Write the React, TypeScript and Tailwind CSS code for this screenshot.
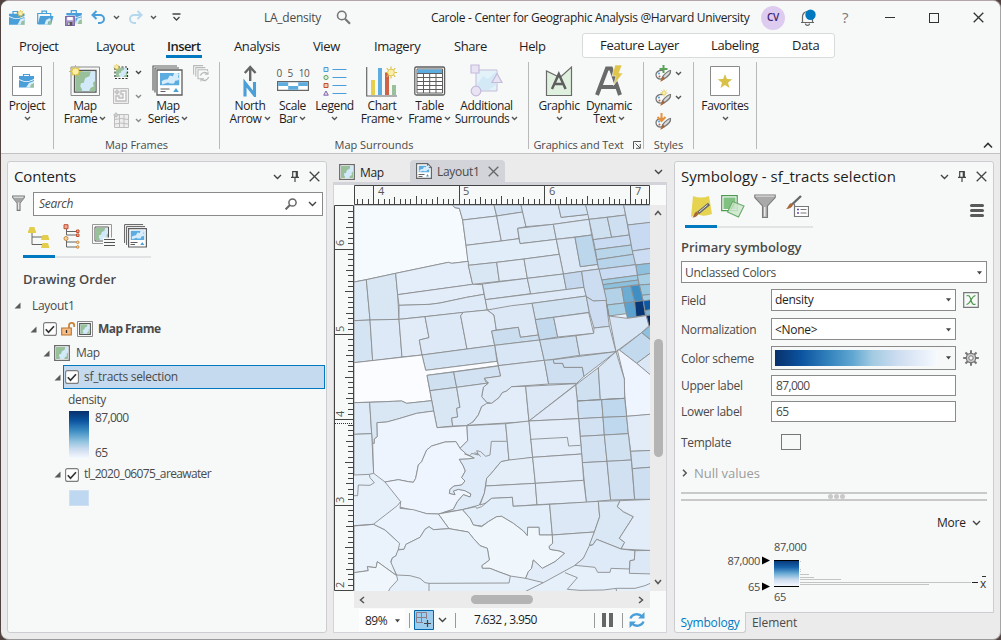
import React from "react";

type Kids = { children?: React.ReactNode };

/* ---------- small glyphs ---------- */

function Chev({ c = "#555" }: { c?: string }) {
  return (
    <svg className="inline-block h-[5px] w-[7px] shrink-0" viewBox="0 0 7 5">
      <path d="M1 1l2.5 2.5L6 1" fill="none" stroke={c} strokeWidth="1.4" />
    </svg>
  );
}

function ChevBig() {
  return (
    <svg className="h-[6px] w-[9px] shrink-0" viewBox="0 0 9 6">
      <path d="M1 1l3.5 3.5L8 1" fill="none" stroke="#444" strokeWidth="1.4" />
    </svg>
  );
}

function Close({ s = "#444" }: { s?: string }) {
  return (
    <svg className="h-[11px] w-[11px] shrink-0" viewBox="0 0 11 11">
      <path d="M.7.7l9.6 9.6M10.3.7L.7 10.3" stroke={s} strokeWidth="1.3" />
    </svg>
  );
}

function Pin() {
  return (
    <svg className="h-[11px] w-[8px] shrink-0" viewBox="0 0 8 11">
      <path d="M1.7 6V.6h4.6V6M0 6.4h8M4 6.4V11" fill="none" stroke="#444" strokeWidth="1.2" />
      <path d="M5.4 1v5" stroke="#444" strokeWidth="1.4" />
    </svg>
  );
}

function Sun({ x, y, r }: { x: number; y: number; r: number }) {
  const rays = [0, 45, 90, 135, 180, 225, 270, 315];
  return (
    <g transform={`translate(${x} ${y})`} stroke="#d9bd3c">
      {rays.map((a) => (
        <path key={a} d={`M0 ${-r * 1.1}V${-r * 1.8}`} transform={`rotate(${a})`} strokeWidth={r * 0.32} />
      ))}
      <circle r={r} fill="#fbeea8" strokeWidth={r * 0.25} />
    </g>
  );
}

function Land({ x, y, w, h }: { x: number; y: number; w: number; h: number }) {
  return (
    <svg x={x} y={y} width={w} height={h} viewBox="0 0 12 12" preserveAspectRatio="none">
      <path fill="#d2e9fa" d="M0 0h12v12H0z" />
      <path fill="#98c19b" d="M0 0h9.3L8.5 3 6 4 5 7H3.500l-.5 2L4.200 11 3.500 12H0z" />
      <path fill="#98c19b" d="M12 5.500L10.500 7l.5 2-2 1-.7 2H12z" />
    </svg>
  );
}

function BlueMap({ x, y, w, h }: { x: number; y: number; w: number; h: number }) {
  return (
    <svg x={x} y={y} width={w} height={h} viewBox="0 0 18 12" preserveAspectRatio="none">
      <path fill="#5dace0" d="M0 0h18v12H0z" />
      <path fill="#d7edfb" d="M9 2.500l3 .5 1-3h3l1.500 1-1 3 1.500 1-1 2-3 .5-1 2.500H9L7.500 9 5 10 2 11l-.5-3L4 6.500 7 6z" />
    </svg>
  );
}

function MapBox({ size }: { size: "s" | "m" }) {
  return (
    <svg className={size === "s" ? "h-[15px] w-[15px] shrink-0" : "h-[16px] w-[16px] shrink-0"} viewBox="0 0 16 16">
      <path d="M.7.7h14.600v14.600H.7z" fill="#fff" stroke="#6b6b6b" strokeWidth="1.3" />
      <Land x={2} y={2} w={12} h={12} />
    </svg>
  );
}

function FrameBox() {
  return (
    <svg className="h-[16px] w-[16px] shrink-0" viewBox="0 0 16 16">
      <path d="M.5.5h15v15H.5z" fill="#f7f7f7" stroke="#8a8a8a" />
      <path d="M2.700 2.700h10.600v10.600H2.700z" fill="#fff" stroke="#555" strokeWidth="1.2" />
      <Land x={3.300} y={3.300} w={9.400} h={9.400} />
    </svg>
  );
}

function LayoutPage() {
  return (
    <svg className="h-[16px] w-[16px] shrink-0" viewBox="0 0 16 16">
      <path d="M.6.6h11l3.800 3.800v11H.6z" fill="#fff" stroke="#666" strokeWidth="1.2" />
      <path d="M11.500.6v4h4" fill="none" stroke="#666" />
      <BlueMap x={2.500} y={2.500} w={11} h={7} />
      <path d="M2.500 11.500h6M2.500 13.500h4" stroke="#666" />
      <path d="M11.500 11l1.500 2.500h-3z" fill="#4a9fd8" />
    </svg>
  );
}

function Tri() {
  return (
    <svg className="h-[7px] w-[7px] shrink-0" viewBox="0 0 7 7">
      <path d="M6.500.5v6h-6z" fill="#5a5a5a" />
    </svg>
  );
}

function Check() {
  return (
    <svg className="h-[14px] w-[14px] shrink-0" viewBox="0 0 14 14">
      <rect x=".6" y=".6" width="12.800" height="12.800" rx="2" fill="#fff" stroke="#7d7d7d" strokeWidth="1.1" />
      <path d="M2.800 7.200l2.700 3 5.500-6" fill="none" stroke="#333" strokeWidth="1.700" />
    </svg>
  );
}

function DropTri() {
  return (
    <svg className="h-[4px] w-[5px] shrink-0" viewBox="0 0 5 4">
      <path d="M0 .3h5L2.500 3.600z" fill="#444" />
    </svg>
  );
}

function Funnel() {
  return (
    <svg className="h-[16px] w-[13px] shrink-0" viewBox="0 0 13 16">
      <path d="M.7 1h11.600v1.500L8 8v7.400H5.200V8L.7 2.500z" fill="#e8e8e8" stroke="#777" strokeWidth="1.100" />
      <path d="M1 2.800h11L8 7.600H5z" fill="#a4a4a4" />
    </svg>
  );
}

/* ---------- title bar ---------- */

function Briefcase({ kind }: { kind: "new" | "open" | "save" }) {
  return (
    <svg className="h-[16px] w-[17px] shrink-0" viewBox="0 0 17 16">
      {kind === "open" ? (
        <g>
          <path d="M.7 14V3.500h13V6" fill="none" stroke="#4a9fd8" strokeWidth="1.200" />
          <path d="M5 3.500V1.200h4.500v2.300" fill="none" stroke="#4a9fd8" strokeWidth="1.200" />
          <path d="M3 6h13.500l-2.300 8.500H.7z" fill="#4a9fd8" />
          <path d="M13 8l-4 2-1.500 4.500h3l1-3 2.500-1z" fill="#d7edfb" />
          <path d="M14.500 10l-2.500 1-1 3.500h3z" fill="#98c19b" />
        </g>
      ) : (
        <g transform={kind === "save" ? "translate(1.300 -.8)" : undefined}>
          <path d={kind === "save" ? "M5 4V1.500h5V4" : "M4 4V1.500h4.500V4"} fill="none" stroke="#4a9fd8" strokeWidth="1.200" />
          <path d="M0 3.700h15.500V6L10 8H5L0 6z" fill="#4a9fd8" />
          <path d="M0 7l5 1.800h5L15.500 7v7.800H0z" fill="#4a9fd8" />
          <path d="M15.500 8l-4 1-3 5.800h7z" fill="#d7edfb" />
          <path d="M15.500 10l-3 1.500-1 3.300h4z" fill="#98c19b" />
        </g>
      )}
      {kind === "new" && <Sun x={11.500} y={3.600} r={2.200} />}
      {kind === "save" && (
        <g>
          <path d="M0 5.500h10.500V16H0z" fill="#f7f9f9" />
          <path d="M.6 6.600h8.800v8.800H.6z" fill="#a993cc" stroke="#8068a8" strokeWidth="1.100" />
          <path d="M2.200 7h5.600v3.300H2.200z" fill="#fff" />
          <path d="M2.700 12h4.600v3.400H2.700z" fill="#555" />
          <path d="M3.300 12.600h1.200v2.400H3.300z" fill="#fff" />
        </g>
      )}
    </svg>
  );
}

function Undo({ c, flip }: { c: string; flip?: boolean }) {
  return (
    <svg className="h-[15px] w-[15px] shrink-0" viewBox="0 0 15 15">
      <g transform={flip ? "matrix(-1 0 0 1 15 0)" : undefined} fill="none" stroke={c} strokeWidth="2">
        <path d="M5.500 1L1.500 5l4 4" />
        <path d="M1.500 5h7.500a4 4 0 0 1 0 8H7" />
      </g>
    </svg>
  );
}

function TitleBar() {
  return (
    <div className="flex h-[33px] shrink-0 items-center pl-[8px] text-[12px] text-[#1e1e1e]">
      <div className="flex w-[28px]"><Briefcase kind="new" /></div>
      <div className="flex w-[28px]"><Briefcase kind="open" /></div>
      <div className="flex w-[26px]"><Briefcase kind="save" /></div>
      <div className="flex w-[22px]"><Undo c="#4a9fd8" /></div>
      <div className="flex w-[15px]"><Chev /></div>
      <div className="flex w-[22px]"><Undo c="#b5d8ef" flip /></div>
      <div className="flex w-[22px]"><Chev /></div>
      <svg className="h-[9px] w-[9px] shrink-0" viewBox="0 0 9 9">
        <path d="M.5 1h8M1.500 4l3 3 3-3" fill="none" stroke="#444" strokeWidth="1.300" />
      </svg>
      <div className="ml-[83px] w-[72px] whitespace-nowrap tracking-[-0.25px] text-[#4a4a4a]">LA_density</div>
      <svg className="h-[15px] w-[15px] shrink-0" viewBox="0 0 15 15">
        <circle cx="5.800" cy="5.500" r="4.300" fill="none" stroke="#777" strokeWidth="1.600" />
        <path d="M9 8.700l5 5" stroke="#777" strokeWidth="2.200" />
      </svg>
      <div className="ml-[80px] w-[330px] whitespace-nowrap tracking-[-0.31px]">
        Carole - Center for Geographic Analysis @Harvard University
      </div>
      <div className="flex h-[24px] w-[24px] items-center justify-center rounded-full bg-[#decbf0] text-[10px] font-semibold tracking-[-0.2px] text-[#3f2470]">CV</div>
      <svg className="ml-[15px] h-[17px] w-[18px] shrink-0" viewBox="0 0 18 17">
        <path d="M1 13.500h13M2.500 13V7.500a5 5 0 0 1 5-5M12.500 8v5.500M5.500 14.500a2 1.800 0 0 0 4 0" fill="none" stroke="#666" strokeWidth="1.200" />
        <circle cx="10.500" cy="5.800" r="5.200" fill="#0079c1" />
      </svg>
      <div className="ml-[24px] w-[43px] text-[15px] text-[#777]">?</div>
      <div className="h-px w-[10px] bg-[#333]" />
      <div className="ml-[34px] h-[10px] w-[10px] border border-[#333]" />
      <div className="ml-[34px] flex"><Close s="#333" /></div>
    </div>
  );
}

function TabBar() {
  return (
    <div className="flex h-[28px] shrink-0 items-start text-[13px] text-[#1e1e1e]">
      <div className="ml-[18px] w-[77px] pt-[2px] leading-[20px] tracking-[-0.4px]">Project</div>
      <div className="w-[70px] pt-[2px] leading-[20px] tracking-[-0.4px]">Layout</div>
      <div className="flex w-[68px] flex-col pt-[2px] leading-[20px]">
        <span className="pl-px font-semibold tracking-[-0.55px]">Insert</span>
        <span className="-mt-px h-[3px] w-[36px] bg-[#0079c1]" />
      </div>
      <div className="w-[79px] pt-[2px] leading-[20px] tracking-[-0.4px]">Analysis</div>
      <div className="w-[61px] pt-[2px] leading-[20px] tracking-[-0.4px]">View</div>
      <div className="w-[80px] pt-[2px] leading-[20px] tracking-[-0.4px]">Imagery</div>
      <div className="w-[65px] pt-[2px] leading-[20px] tracking-[-0.4px]">Share</div>
      <div className="w-[63px] pt-[2px] leading-[20px] tracking-[-0.4px]">Help</div>
      <div className="-mt-px flex h-[25px] w-[253px] items-center rounded-[3px] border border-[#d9dada] bg-white pl-[17px]">
        <span className="w-[111px] tracking-[-0.3px]">Feature Layer</span>
        <span className="w-[81px] tracking-[-0.4px]">Labeling</span>
        <span className="tracking-[-0.3px]">Data</span>
      </div>
    </div>
  );
}

/* ---------- ribbon ---------- */

function ProjectIcon() {
  return (
    <svg className="h-[30px] w-[30px]" viewBox="0 0 30 30">
      <path d="M.5.500h29v29H.5z" fill="#fff" stroke="#8a8a8a" />
      <path d="M11.500 10V8.500h6V10" fill="none" stroke="#4a9fd8" strokeWidth="1.200" />
      <path d="M7 10h15v3l-5 2h-5l-5-2z" fill="#4a9fd8" />
      <path d="M7 14l5 1.800h5l5-1.800v7.500H7z" fill="#4a9fd8" />
      <path d="M22 15l-5 2-3 4.500h8z" fill="#d7edfb" />
      <path d="M22 17l-3 1.500-1 3h4z" fill="#98c19b" />
    </svg>
  );
}

function MapFrameIcon() {
  return (
    <svg className="h-[32px] w-[32px]" viewBox="0 0 32 32">
      <path d="M2 2h28.500v28.500H2z" fill="#f7f8f8" stroke="#8a8a8a" />
      <path d="M5.500 5.500h21.500v21.500H5.500z" fill="#fff" stroke="#555" strokeWidth="1.300" />
      <Land x={6.200} y={6.200} w={20.200} h={20.200} />
      <Sun x={6.500} y={6.500} r={3.600} />
    </svg>
  );
}

function MapSeriesIcon() {
  return (
    <svg className="h-[32px] w-[32px]" viewBox="0 0 32 32">
      <path d="M1 25.500V1h24M3 27.500V3h24" fill="none" stroke="#5e5e5e" strokeWidth="1.200" />
      <path d="M5 5h25v25H5z" fill="#fff" stroke="#5e5e5e" strokeWidth="1.300" />
      <BlueMap x={8} y={8} w={19.500} h={12.500} />
      <path d="M8.500 24h9M8.500 26.500h5" stroke="#5e5e5e" strokeWidth="1.200" />
      <path d="M24 23l2.800 4h-5.600z" fill="#4a9fd8" />
    </svg>
  );
}

function ReshapeIcons({ kind }: { kind: 0 | 1 | 2 }) {
  const g = "#bdbdbd";
  return (
    <svg className="h-[16px] w-[16px] shrink-0" viewBox="0 0 16 16">
      {kind === 0 && (
        <g>
          <Land x={3} y={3.500} w={11} h={9.500} />
          <path d="M2 4v10.500h12.500V3H5" fill="none" stroke="#333" strokeWidth="1.200" strokeDasharray="2 1.500" />
          <Sun x={3.600} y={3.200} r={1.900} />
        </g>
      )}
      {kind === 1 && (
        <g fill="none" stroke={g}>
          <path d="M.5.500h15v15H.5z" fill="#eee" />
          <path d="M8 3h5v10H3V8h3v2h4V6H8z" strokeWidth="1.300" fill="#fafafa" />
          <circle cx="4" cy="4" r="1.500" />
          <path d="M4 1v6M1 4h6" strokeWidth=".7" />
        </g>
      )}
      {kind === 2 && (
        <g fill="none" stroke={g}>
          <path d="M1.500 2.500h14v13h-14z" fill="#eee" />
          <path d="M2 7.500q6-2 13 0M2 12q6-2 13 0M6.500 3v12M11 3v12" />
          <circle cx="3" cy="3" r="1.600" fill="#eee" />
          <path d="M3 0v6M0 3h6" strokeWidth=".7" />
        </g>
      )}
    </svg>
  );
}

function SeriesRefresh() {
  return (
    <svg className="h-[17px] w-[17px] shrink-0" viewBox="0 0 17 17">
      <g fill="none" stroke="#b9b9b9" strokeWidth="1.100">
        <path d="M.6 9.500V.6h9.500M2.800 11.500V2.600h9.500M14.500 6V4.700H5v9h3" />
        <path d="M7.500 10.500a4 4 0 0 1 7-1.500M15.500 12a4 4 0 0 1-7 2" strokeWidth="1.400" />
        <path d="M15 6.500V9.300h-3M8 16.500v-2.800h3" />
      </g>
    </svg>
  );
}

function NorthIcon() {
  return (
    <svg className="h-[32px] w-[16px]" viewBox="0 0 16 32">
      <path d="M8.200 16V3M2.800 8l5.400-6 5.400 6" fill="none" stroke="#666" strokeWidth="2.400" />
      <path d="M3 31.500V18l9.500 12V17" fill="none" stroke="#4a9fd8" strokeWidth="3.100" />
    </svg>
  );
}

function ScaleIcon() {
  return (
    <div className="-mt-[5px] flex w-[34px] flex-col items-center">
      <div className="flex h-[15px] w-[34px] justify-between text-[10px] leading-[15px] tracking-[-0.3px] text-[#555]">
        <span className="pl-px">0</span>
        <span>5</span>
        <span>10</span>
      </div>
      <svg className="h-[10px] w-[32px]" viewBox="0 0 32 10">
        <path d="M.6.6h30.800v8.800H.6z" fill="#fff" stroke="#666" strokeWidth="1.200" />
        <path d="M1.200 1.200h10v3.800h-10zM11.200 5h10v3.800h-10zM21.200 1.200h9.600V5h-9.600z" fill="#5dace0" />
      </svg>
    </div>
  );
}

function LegendIcon() {
  return (
    <svg className="h-[30px] w-[24px]" viewBox="0 0 24 30">
      <path d="M9.500 3.500h14M9.500 11.500h14M9.500 19.500h14M9.500 27.500h14" stroke="#4a9fd8" strokeWidth="1.100" />
      <path d="M1 1.500h4v4H1z" fill="#d7edfb" stroke="#4a9fd8" />
      <circle cx="3" cy="11.500" r="2.100" fill="#dcefdc" stroke="#5ea05e" />
      <path d="M1 17.500h4v4H1z" fill="#f4c7b8" stroke="#c05030" />
      <path d="M3 25l2.300 4.200H.7z" fill="#e4dcf2" stroke="#8068a8" />
    </svg>
  );
}

function ChartIcon() {
  return (
    <svg className="h-[32px] w-[32px]" viewBox="0 0 32 32">
      <path d="M.7 2v29H31" fill="none" stroke="#666" strokeWidth="1.200" />
      <path d="M5 15h4v15H5z" fill="#e6cf4c" />
      <path d="M12 3h4v27h-4z" fill="#5dace0" />
      <path d="M19 8h4v22h-4z" fill="#cf6244" />
      <path d="M26 20h4v10h-4z" fill="#98c19b" />
      <Sun x={25} y={7.500} r={3.400} />
    </svg>
  );
}

function TableIcon() {
  return (
    <svg className="h-[32px] w-[32px]" viewBox="0 0 32 32">
      <rect x=".8" y="2" width="29.800" height="28" rx="1.500" fill="#f7f8f8" stroke="#5e5e5e" strokeWidth="1.300" />
      <path d="M3 4h25.500v24H3z" fill="#fff" stroke="#5e5e5e" />
      <path d="M3.500 4.500h24.500v4H3.500z" fill="#5dace0" />
      <path d="M3 8.500h25.500M3 12.500h25.500M3 16.500h25.500M3 20.500h25.500M3 24.500h25.500M9.500 8.500V28M15.700 8.500V28M22 8.500V28" stroke="#5e5e5e" />
    </svg>
  );
}

function SurroundsIcon() {
  return (
    <svg className="h-[33px] w-[33px]" viewBox="0 0 33 33">
      <path d="M6 6h21v21H6z" fill="#e3f2f9" stroke="#c3bcd8" />
      <path d="M6 22l7-10 5 3 9-8v13l-8 6H6z" fill="#d3e9f6" />
      <path d="M1 1h8v8H1z" fill="#e9e3f3" stroke="#c4bbda" strokeWidth="1.200" />
      <circle cx="6" cy="27" r="4.800" fill="#e9e3f3" stroke="#c4bbda" strokeWidth="1.200" />
      <path d="M27 9.500l5 9H22z" fill="#e9e3f3" stroke="#c4bbda" strokeWidth="1.200" />
    </svg>
  );
}

function GraphicIcon() {
  return (
    <svg className="h-[32px] w-[28px]" viewBox="0 0 28 32">
      <path d="M1.500 6v24.500h25V2L15 12.500z" fill="#e0f0de" stroke="#6b6b6b" strokeWidth="1.200" />
      <path d="M7 24l6.800-15 6.800 15M9 19h9.500" fill="none" stroke="#5e5e5e" strokeWidth="2.500" />
    </svg>
  );
}

function DynamicIcon() {
  return (
    <svg className="h-[32px] w-[30px]" viewBox="0 0 30 32">
      <path d="M3 30L13 3.500h4L26 30M7 22h15" fill="none" stroke="#6a6a6a" strokeWidth="4" />
      <path d="M21 0h7l-3 8h4L19.500 20.500 22 11h-4z" fill="#dfc64a" stroke="#f7f9f9" strokeWidth=".6" />
    </svg>
  );
}

function Palette({ kind }: { kind: "add" | "new" | "import" }) {
  return (
    <svg className="h-[17px] w-[17px] shrink-0" viewBox="0 0 17 17">
      <path d="M8 5.500C3 5 .8 7.500 1 10s2.500 4.500 5 4c1.500-.5 1.500-2 3-2.500" fill="#f7f9f9" stroke="#777" strokeWidth="1.300" />
      <circle cx="4" cy="8.500" r="1" fill="#4a9fd8" />
      <circle cx="4.500" cy="11.500" r="1" fill="#cf6244" />
      <path d="M15.500 5.500q.8 4-6.500 8.500-1-1-1.500-2.200Q12 6 15.500 5.500z" fill="#d8d8d8" stroke="#777" strokeWidth="1.200" />
      <path d="M8.500 11.500l1.500 1.800c-1 2-3 3.200-5 3.200 1.200-1 1.500-3.500 3.500-5z" fill="#a9683a" />
      {kind === "add" && <path d="M8.500 0v8M4.500 4h8" stroke="#5ba35b" strokeWidth="2" />}
      {kind === "new" && <Sun x={9} y={4} r={2} />}
      {kind === "import" && <path d="M6.500 0v7M2.500 4l4 4 4-4" fill="none" stroke="#e9913a" strokeWidth="2" />}
    </svg>
  );
}

function FavIcon() {
  return (
    <svg className="h-[30px] w-[30px]" viewBox="0 0 30 30">
      <path d="M.5.500h29v29H.5z" fill="#fff" stroke="#8a8a8a" />
      <path d="M15 8l1.900 5.100 5.400.2-4.300 3.400 1.500 5.200-4.500-3-4.500 3 1.500-5.200-4.300-3.400 5.400-.2z" fill="#d9c148" />
    </svg>
  );
}

function Big({ icon, a, b, w }: { icon: React.ReactNode; a: string; b?: string; w: string }) {
  return (
    <div className={`flex shrink-0 flex-col items-center ${w}`}>
      <div className="flex h-[37px] items-center justify-center">{icon}</div>
      <div className="h-[13px] whitespace-nowrap leading-[13px]">{a}</div>
      <div className="flex h-[13px] items-center gap-[2px] whitespace-nowrap leading-[13px]">
        {b && <span>{b}</span>}
        <Chev />
      </div>
    </div>
  );
}

function Group({ w, title, children }: Kids & { w: string; title?: React.ReactNode }) {
  return (
    <div className={`flex h-[87px] shrink-0 flex-col border-r border-[#b9b9b9] ${w}`}>
      <div className="flex h-[76px] shrink-0">{children}</div>
      <div className="flex h-[14px] shrink-0 items-center justify-center whitespace-nowrap text-[11px] leading-[14px] tracking-[-0.05px] text-[#4a4a4a]">{title}</div>
    </div>
  );
}

function Ribbon() {
  return (
    <div className="flex h-[92px] shrink-0 border-b border-[#c3c3c3] text-[12px] tracking-[-0.38px] text-[#1e1e1e]">
      <Group w="w-[53px]">
        <Big w="w-[52px]" icon={<ProjectIcon />} a="Project" />
      </Group>
      <Group w="w-[166px]" title="Map Frames">
        <Big w="ml-[8px] w-[46px]" icon={<MapFrameIcon />} a="Map" b="Frame" />
        <div className="ml-[5px] flex w-[32px] flex-col gap-[8px] pt-[2px]">
          {([0, 1, 2] as const).map((k) => (
            <div key={k} className="flex h-[16px] items-center gap-[6px]">
              <ReshapeIcons kind={k} />
              <Chev c={k === 0 ? "#444" : "#8a8a8a"} />
            </div>
          ))}
        </div>
        <Big w="w-[46px]" icon={<MapSeriesIcon />} a="Map" b="Series" />
        <div className="ml-[2px] pt-[3px]"><SeriesRefresh /></div>
      </Group>
      <Group w="w-[309px]" title="Map Surrounds">
        <Big w="ml-[6px] w-[48px]" icon={<NorthIcon />} a="North" b="Arrow" />
        <Big w="w-[37px]" icon={<ScaleIcon />} a="Scale" b="Bar" />
        <Big w="w-[47px]" icon={<LegendIcon />} a="Legend" />
        <Big w="w-[48px]" icon={<ChartIcon />} a="Chart" b="Frame" />
        <Big w="w-[47px]" icon={<TableIcon />} a="Table" b="Frame" />
        <Big w="w-[67px] tracking-[-0.45px]" icon={<SurroundsIcon />} a="Additional" b="Surrounds" />
      </Group>
      <Group
        w="w-[115px]"
        title={
          <span className="flex items-center gap-[9px] pl-[2px] tracking-[-0.15px]">
            Graphics and Text
            <svg className="h-[8px] w-[8px]" viewBox="0 0 8 8">
              <path d="M.5 8V.5H8M2.500 2.500L7 7M7.300 3v4.300H3" fill="none" stroke="#555" />
            </svg>
          </span>
        }
      >
        <Big w="ml-[7px] w-[46px]" icon={<GraphicIcon />} a="Graphic" />
        <Big w="w-[54px]" icon={<DynamicIcon />} a="Dynamic" b="Text" />
      </Group>
      <Group w="w-[50px]" title="Styles">
        <div className="flex flex-col gap-[7px] pl-[11px] pt-[3px]">
          <div className="flex h-[17px] items-center gap-[3px]"><Palette kind="add" /><Chev /></div>
          <div className="flex h-[17px] items-center gap-[3px]"><Palette kind="new" /><Chev /></div>
          <div className="flex h-[17px] items-center"><Palette kind="import" /></div>
        </div>
      </Group>
      <Group w="w-[63px]">
        <Big w="w-[62px]" icon={<FavIcon />} a="Favorites" />
      </Group>
      <div className="flex flex-1 items-end justify-end pb-[4px] pr-[7px]">
        <svg className="h-[7px] w-[10px]" viewBox="0 0 10 7">
          <path d="M1 5.500l4-4 4 4" fill="none" stroke="#333" strokeWidth="1.600" />
        </svg>
      </div>
    </div>
  );
}

/* ---------- contents pane ---------- */

function ContentsPane() {
  return (
    <div className="flex h-[472px] w-[320px] shrink-0 flex-col rounded-[3px] border border-[#cdcdd1] bg-[#f7f9f9] pl-px text-[12px] tracking-[-0.3px] text-[#4a4a4a]">
      <div className="flex h-[29px] items-center pl-[5px] text-[15px] text-[#1e1e1e]">
        <span className="w-[259px] tracking-[-0.15px]">Contents</span>
        <ChevBig />
        <span className="ml-[9px] flex"><Pin /></span>
        <span className="ml-[10px] flex"><Close /></span>
      </div>
      <div className="flex h-[24px] items-center pl-[3px]">
        <Funnel />
        <div className="ml-[8px] mt-[2px] flex h-[24px] w-[290px] items-center border border-[#8a8a8a] bg-white pl-[5px] italic">
          <span className="w-[246px]">Search</span>
          <svg className="h-[12px] w-[12px]" viewBox="0 0 12 12">
            <circle cx="7.500" cy="4.500" r="3.600" fill="none" stroke="#666" strokeWidth="1.500" />
            <path d="M5 7L.6 11.400" stroke="#666" strokeWidth="2" />
          </svg>
          <span className="ml-[11px] flex"><ChevBig /></span>
        </div>
      </div>
      <div className="ml-[14px] mt-[8px] flex h-[35px] w-[128px] items-start border-b-[2px] border-[#e2e3e4]">
        <div className="-mb-[2px] flex h-[35px] w-[32px] justify-center border-b-[3px] border-[#0079c1] pt-[2px]">
          <svg className="h-[24px] w-[22px]" viewBox="0 0 22 24">
            <path d="M4 8v11.500h12M4 12h12" fill="none" stroke="#666" />
            <path d="M1.500 2h5l.8 3.500H8V8H0V5.500h.7zM14.500 10h5.500l1.500 5h-8.500zM14.500 18h5.500l1.500 5h-8.500z" fill="#e3cd4b" />
          </svg>
        </div>
        <div className="flex w-[32px] justify-center pt-[1px]">
          <svg className="h-[25px] w-[17px]" viewBox="0 0 17 25">
            <path d="M3.500 5v6h10M3.500 7.500h10M3.500 15v8h10M3.500 18h10" fill="none" stroke="#666" />
            <path d="M1 .7h4v4H1z" fill="#f0a895" stroke="#c05030" />
            <path d="M13.500 6h2.500v2.500h-2.500zM13.500 10h2.500v2.500h-2.500z" fill="#f0a895" stroke="#c05030" />
            <circle cx="3" cy="14.500" r="2" fill="#f7d3a1" stroke="#c88a40" />
            <circle cx="14.700" cy="18.300" r="1.300" fill="#f7d3a1" stroke="#c88a40" />
            <circle cx="14.700" cy="23" r="1.300" fill="#f7d3a1" stroke="#c88a40" />
          </svg>
        </div>
        <div className="flex w-[32px] justify-center pt-[1px]">
          <svg className="h-[24px] w-[23px]" viewBox="0 0 23 24">
            <path d="M.5.500h19v19H.5z" fill="#f7f8f8" stroke="#999" />
            <path d="M3 3h13.500v14H3z" fill="#fff" stroke="#555" />
            <Land x={3.700} y={3.700} w={12.300} h={12.600} />
            <path d="M11 13.500h12v9H11z" fill="#f7f9f9" />
            <path d="M12 15.500h11M12 18.500h11M12 21.500h11" stroke="#555" strokeWidth="1.100" />
          </svg>
        </div>
        <div className="flex w-[32px] justify-center pt-[1px]">
          <svg className="h-[24px] w-[23px]" viewBox="0 0 23 24">
            <path d="M.6 19V.6h18.500M2.600 21V2.600h18.500" fill="none" stroke="#5e5e5e" />
            <path d="M4.600 4.600h17.800v18.400H4.600z" fill="#fff" stroke="#5e5e5e" strokeWidth="1.200" />
            <BlueMap x={6.500} y={6.500} w={14} h={9.500} />
            <path d="M6.500 18.500h7M6.500 20.500h4.500" stroke="#5e5e5e" />
            <path d="M18.300 18l2 3h-4z" fill="#4a9fd8" />
          </svg>
        </div>
      </div>
      <div className="mt-[11px] h-[20px] pl-[14px] text-[13px] font-semibold leading-[20px] tracking-[0.02px]">Drawing Order</div>
      <div className="mt-[5px] flex h-[23px] items-center pl-[5px]"><Tri /><span className="ml-[11px]">Layout1</span></div>
      <div className="flex h-[24px] items-center pl-[21px]">
        <Tri />
        <span className="ml-[6px] flex"><Check /></span>
        <svg className="ml-[4px] h-[14px] w-[15px]" viewBox="0 0 15 14">
          <path d="M8 6V3.500a2.600 2.600 0 0 1 5.200 0V5" fill="none" stroke="#c9843a" strokeWidth="1.800" />
          <path d="M.7 6h9.600v7H.7z" fill="#f7bd84" stroke="#b87430" strokeWidth="1.100" />
          <path d="M5.500 8v3" stroke="#333" strokeWidth="1.300" />
        </svg>
        <span className="ml-px flex"><FrameBox /></span>
        <span className="ml-[5px] font-bold tracking-[-0.55px]">Map Frame</span>
      </div>
      <div className="flex h-[24px] items-center pl-[34px]"><Tri /><span className="ml-[4px] flex"><MapBox size="m" /></span><span className="ml-[6px]">Map</span></div>
      <div className="flex h-[24px] items-center pl-[45px]">
        <Tri />
        <div className="ml-[2px] flex h-[24px] w-[262px] items-center border border-[#0079c1] bg-[#c5daee] pl-px">
          <Check />
          <span className="ml-[5px]">sf_tracts selection</span>
        </div>
      </div>
      <div className="flex h-[22px] items-center pl-[59px] font-medium tracking-[-0.35px]">density</div>
      <div className="flex h-[48px] pl-[60px]">
        <div className="h-[48px] w-[20px] bg-[linear-gradient(180deg,#08306b_0%,#0b539f_20%,#3e8ec4_42%,#93c4df_64%,#cddcf0_80%,#f9fbff_100%)]" />
        <div className="flex flex-col justify-between pl-[6px] leading-[13px] tracking-[-0.65px]"><span>87,000</span><span>65</span></div>
      </div>
      <div className="mt-[3px] flex h-[24px] items-center pl-[45px]">
        <Tri />
        <span className="ml-[4px] flex pt-[2px]"><Check /></span>
        <span className="ml-[5px] tracking-[-0.64px]">tl_2020_06075_areawater</span>
      </div>
      <div className="ml-[60px] mt-[4px] h-[16px] w-[20px] border border-[#cfe0f3] bg-[#bed8f2]" />
    </div>
  );
}

/* ---------- map ---------- */

const TRACTS: [string, string][] = [
  ["#f5faff", "72,150 367,150 375,158 388,160 398,195 408,271 415,319 365,325 355,322 197,355 109,374 72,381"],
  ["#e0ecf9", "367,150 492,150 500,183 398,195 388,160 375,158"],
  ["#d3e3f3", "492,150 573,150 578,171 500,183"],
  ["#e2edf9", "398,195 500,183 514,258 408,271"],
  ["#dfeaf8", "500,183 578,171 588,215 563,220 567,251 514,258"],
  ["#dde9f7", "573,150 685,150 693,187 775,178 777,193 670,208 588,215"],
  ["#d6e5f5", "685,150 767,150 775,178 693,187"],
  ["#d6e4f4", "767,150 881,150 887,180 777,193"],
  ["#dae8f6", "563,220 670,208 679,253 570,266"],
  ["#e1edf9", "408,271 514,258 567,251 570,266 679,253 688,298 582,312 500,322 415,331"],
  ["#dbe8f6", "670,208 777,193 785,240 679,253"],
  ["#dce8f6", "679,253 735,247 751,335 803,328 807,342 755,349 700,357 688,298"],
  ["#bcd7ec", "735,247 785,240 803,328 751,335"],
  ["#cfe0f1", "777,193 832,187 845,247 790,254"],
  ["#cddff1", "832,187 887,180 898,240 845,247"],
  ["#c9dbf2", "790,254 898,240 904,270 796,284"],
  ["#b9d5ea", "796,284 904,270 910,298 801,314"],
  ["#b7d4ea", "801,314 910,298 917,329 806,343"],
  ["#d6e4f4", "881,150 970,150 970,202 893,210 887,180"],
  ["#c8daf2", "893,210 970,201 970,279 907,288"],
  ["#cbdcf3", "907,288 970,279 970,324 917,330"],
  ["#8fc1de", "917,330 970,324 970,354 922,361"],
  ["#c9dbf2", "806,343 917,329 922,361 815,375"],
  ["#a2cce3", "815,375 922,361 925,375 819,389"],
  ["#8dc0dd", "819,389 925,375 928,388 822,403"],
  ["#a9cfe5", "922,361 970,354 970,387 928,390"],
  ["#9bc8e1", "928,390 970,387 970,417 935,421"],
  ["#a5cde4", "935,421 970,417 970,436 940,440"],
  ["#b3d2e8", "822,403 875,397 883,444 831,450"],
  ["#6dadd4", "875,397 902,393 914,440 883,444"],
  ["#3f8fc5", "902,393 928,390 940,440 914,440"],
  ["#a6cee4", "831,450 883,444 890,476 836,483"],
  ["#5aa1cf", "883,444 914,440 918,485 892,489"],
  ["#083776", "914,440 940,437 946,481 918,485"],
  ["#0c59a5", "940,438 970,433 970,463 945,467"],
  ["#7db5d8", "945,467 970,463 970,479 949,482"],
  ["#dbe8f5", "72,381 109,374 120,495 72,497"],
  ["#d9e7f5", "109,374 197,355 203,419 207,493 120,495"],
  ["#e4eefa", "197,355 355,322 365,325 415,319 415,331 428,388 203,419"],
  ["#d9e7f5", "415,331 500,322 508,379 428,388"],
  ["#e1ecf8", "500,322 582,312 592,370 508,379"],
  ["#dde9f7", "582,312 688,298 700,357 592,370"],
  ["#e3edf9", "203,419 428,388 457,389 462,418 410,427 330,444 300,448 207,451"],
  ["#dfeaf8", "207,451 300,448 330,444 410,427 462,418 466,435 472,465 395,473 285,485 207,493"],
  ["#dde9f7", "457,387 592,370 602,416 466,434"],
  ["#dbe8f6", "592,370 700,357 709,404 602,417"],
  ["#c5d8ee", "700,357 755,349 762,397 709,404"],
  ["#dfeaf8", "466,434 762,397 769,423 606,445 545,455 530,460 472,466"],
  ["#d1e2f2", "606,445 769,423 778,472 616,494"],
  ["#cdddf1", "755,349 807,342 822,403 830,437 790,438 769,425 762,397"],
  ["#cddcf0", "769,425 790,438 828,436 838,514 792,519 778,472"],
  ["#d5e4f3", "72,497 120,495 128,617 72,623"],
  ["#dde9f7", "120,495 207,493 216,606 128,617"],
  ["#e1ecf8", "207,493 285,485 297,548 268,555 276,600 216,606"],
  ["#dde9f7", "285,485 400,472 392,482 411,582 276,600 268,555 297,548"],
  ["#e2ecf8", "400,472 472,465 492,480 499,525 485,528 494,571 411,582 392,482"],
  ["#dde8f7", "472,465 545,452 606,445 616,494 625,540 571,547 565,517 499,525 492,480"],
  ["#cbdef0", "485,528 565,517 571,547 625,540 629,555 494,571"],
  ["#c3d9ee", "616,494 671,487 683,546 629,555"],
  ["#dfeaf8", "671,487 776,473 791,535 683,546"],
  ["#d9e6f5", "494,571 629,555 643,616 505,632"],
  ["#d4e3f3", "276,600 494,571 501,619 287,646"],
  ["#fafcff", "72,623 276,600 287,646 501,619 505,632 291,661 305,737 230,745 215,738 190,739 72,743"],
  ["#cddff0", "629,555 738,542 749,601 643,617"],
  ["#d9e6f5", "738,542 791,535 792,519 838,514 858,590 749,601"],
  ["#d8e5f5", "831,450 836,483 892,490 949,482 957,512 935,533 858,590"],
  ["#072b62", "949,482 970,479 970,515 957,512"],
  ["#8fc1de", "935,533 970,505 970,560"],
  ["#c3d9ee", "868,585 935,533 970,562 970,588 920,625"],
  ["#dce7f6", "920,625 970,588 970,668"],
  ["#eff5fe", "862,585 868,585 920,625 970,667 970,778 890,784 884,720 883,672"],
  ["#cfe0f1", "291,661 371,651 380,697 300,707"],
  ["#d3e2f3", "371,651 505,633 512,663 463,670 467,680 475,684 380,697"],
  ["#dee9f7", "505,632 643,616 656,687 545,695 530,708 517,713 507,728 485,745 470,742 455,725 460,697 475,684 463,670 512,663"],
  ["#d9e7f5", "300,707 380,697 390,757 380,760 383,786 365,789 368,813 321,818 311,768"],
  ["#dfebf8", "380,697 475,684 460,697 455,725 470,742 475,745 455,755 445,780 425,805 411,812 368,813 365,789 383,786 380,760 390,757"],
  ["#e2edf9", "470,745 485,745 507,728 517,713 530,708 545,695 587,694 597,800 411,811 430,800 445,780 455,755"],
  ["#dce8f6", "587,694 740,686 597,798"],
  ["#cddff0", "643,616 670,614 672,625 698,625 702,637 757,637 762,664 740,685 656,687"],
  ["#cfe0f2", "670,614 858,590 762,664 757,637 702,637 698,625 672,625"],
  ["#cfe0f1", "737,690 805,638 811,734 742,738"],
  ["#d9e6f5", "858,590 805,638 811,734 884,730 883,672"],
  ["#dfe9f7", "737,690 742,738 746,791 597,798"],
  ["#cddff2", "742,738 815,734 819,787 746,791"],
  ["#c0d8ed", "815,734 884,730 890,784 819,787"],
  ["#d3e2f3", "746,791 819,787 823,840 751,844"],
  ["#c0d8ed", "819,787 890,784 895,836 823,840"],
  ["#e1ecf8", "890,784 970,777 970,886 902,889 895,836"],
  ["#d3e2f3", "751,844 823,840 831,919 757,923"],
  ["#d0e1f2", "823,840 895,836 904,915 831,919"],
  ["#d6e4f4", "757,923 831,919 842,1035 769,1042"],
  ["#d2e1f2", "831,919 904,915 914,1033 842,1035"],
  ["#d4e3f3", "902,889 970,886 970,936 907,941"],
  ["#cddff0", "907,941 970,936 970,1033 914,1033"],
  ["#dfeaf8", "72,743 119,742 125,836 72,838"],
  ["#d9e7f5", "119,742 190,739 215,738 230,745 305,737 311,768 260,775 200,793 170,801 141,803 142,845 133,852 133,865 127,865 125,836"],
  ["#e1ecf9", "72,838 125,836 131,955 118,958 72,960"],
  ["#edf4fe", "141,803 170,801 200,793 260,775 311,768 321,818 411,812 413,857 390,880 378,860 345,861 305,873 290,885 275,920 265,930 257,970 250,982 235,980 205,974 165,981 131,955 128,865 133,865 133,852 142,845"],
  ["#eff5ff", "290,885 305,873 345,861 378,860 390,880 410,898 433,909 413,912 388,913 400,933 406,948 395,968 405,978 395,990 372,993 360,1003 358,1015 375,1019 370,1008 385,1003 405,1007 423,1017 420,1026 400,1019 382,1040 370,1063 325,1077 290,1076 205,1055 212,1040 165,981 205,974 235,980 250,982 257,970 265,930 275,920"],
  ["#dfebf8", "411,812 527,806 537,915 513,920 484,955 470,970 463,1015 448,1050 397,1064 340,1073 370,1063 382,1040 400,1019 420,1026 423,1017 405,1007 385,1003 370,1008 375,1019 358,1015 360,1003 372,993 395,990 405,978 395,968 406,948 400,933 388,913 413,912 433,909 410,898 390,880 413,857"],
  ["#e0ecf8", "527,806 597,798 608,907 555,915 537,916"],
  ["#e2edf9", "597,798 746,791 755,897 608,907"],
  ["#e4eef9", "537,915 555,913 608,907 616,985 467,993 470,970 484,955 513,920"],
  ["#e2edf9", "608,907 755,897 761,976 616,985"],
  ["#e2edf9", "467,993 616,985 621,1049 549,1054 547,1027 485,1030 465,1045 450,1050 463,1015"],
  ["#e2edf9", "616,985 761,976 769,1042 621,1049"],
  ["#e2eef9", "397,1064 437,1055 440,1060 455,1055 485,1030 547,1027 549,1054 659,1048 667,1140 628,1140 627,1117 593,1117 592,1142 580,1128 550,1105 515,1084 500,1085 475,1100 455,1113 430,1110 420,1090"],
  ["#dce8f5", "659,1048 805,1039 809,1085 793,1131 667,1140"],
  ["#eff6fc", "397,1064 420,1090 430,1110 455,1115 475,1100 500,1085 515,1084 550,1105 580,1128 592,1142 593,1117 627,1117 628,1140 667,1140 668,1165 657,1175 660,1183 690,1188 704,1195 675,1220 637,1240 610,1215 605,1240 595,1250 587,1270 541,1263 505,1250 480,1240 457,1240 455,1232 478,1215 472,1180 450,1172 430,1150 415,1131 357,1121 325,1077"],
  ["#eaf3fd", "212,1040 202,1052 130,1108 165,1125 203,1160 205,1183 222,1183 228,1168 270,1147 285,1123 297,1115 310,1124 357,1121 325,1077 290,1076 250,1064 210,1060"],
  ["#e6f0fa", "310,1124 357,1121 415,1131 430,1150 450,1172 472,1180 478,1215 455,1232 457,1240 480,1240 505,1250 541,1263 537,1284 297,1285 285,1283 270,1270 240,1262 200,1260 182,1225 187,1208 197,1203 202,1185 222,1183 228,1168 270,1147 285,1123 297,1115"],
  ["#eaf2fc", "72,1112 130,1108 165,1125 203,1160 209,1165 205,1183 197,1203 187,1208 182,1220 200,1262 142,1220 138,1238 112,1235 115,1247 72,1253"],
  ["#eff6fc", "72,1253 115,1247 112,1235 138,1238 142,1220 200,1262 203,1275 180,1300 175,1310 72,1310"],
  ["#e3edf9", "667,1140 793,1131 775,1185 760,1210 735,1231 640,1283 587,1270 595,1250 605,1240 610,1215 637,1240 675,1220 704,1195 690,1188 660,1183 657,1175 668,1165"],
  ["#dae7f5", "805,1039 870,1037 862,1055 880,1070 910,1085 868,1150 884,1162 873,1182 800,1153 788,1170 778,1170 793,1131 809,1085"],
  ["#e3edf9", "870,1037 970,1033 970,1187 873,1182 884,1162 868,1150 910,1085 880,1070 862,1055"],
  ["#dfeaf8", "778,1172 788,1170 800,1153 873,1182 915,1187 913,1215 900,1217 898,1242 843,1240 840,1252 803,1252 795,1237 735,1231 760,1210"],
  ["#dce8f5", "915,1187 970,1186 970,1257 898,1255 900,1217 913,1215"],
];

const LINES = [
  "601,853 712,847 716,873 751,871",
  "530,859 484,859 480,900 467,904 452,890 440,887 445,900 425,895 420,902 403,897",
  "433,893 445,897 452,905",
  "118,958 120,968 133,983 120,991 85,990 83,1022 72,1022",
  "130,1108 72,1113",
  "297,1285 297,1310",
  "640,1283 585,1310",
  "705,1253 742,1268 712,1303 750,1306 820,1305 860,1300 915,1300 945,1292 965,1283",
  "858,1300 860,1310",
  "742,738 884,730",
];

function TractMap() {
  return (
    <svg className="h-[386px] w-[296px] shrink-0" viewBox="72 150 888 1158">
      <path d="M72 150h888v1158H72z" fill="#e6f0fb" />
      <g stroke="#8b8d8f" strokeWidth="2.700" strokeLinejoin="round">
        {TRACTS.map(([fill, pts], i) => (
          <polygon key={i} fill={fill} points={pts} />
        ))}
        {LINES.map((pts, i) => (
          <polyline key={i} fill="none" points={pts} />
        ))}
      </g>
    </svg>
  );
}

function HRuler() {
  const ticks: React.ReactNode[] = [];
  for (let i = -3; i < 52; i++) {
    const x = 19.400 + i * 5.356;
    if (x > 295) break;
    const m = ((i % 16) + 16) % 16;
    const y = m === 0 ? 0 : m === 8 ? 11 : m % 4 === 0 ? 12 : 14;
    ticks.push(<path key={i} d={`M${Math.floor(x) + 0.5} ${y}V19`} />);
  }
  return (
    <svg className="h-[20px] w-[296px] shrink-0 overflow-visible" viewBox="0 0 296 20">
      <path d="M.5.500h295v19H.5z" fill="#f7f9f9" stroke="#444" />
      <g stroke="#444">{ticks}</g>
      <g fontSize="11" fill="#555">
        <text x="24" y="10">4</text>
        <text x="109" y="10">5</text>
        <text x="195" y="10">6</text>
        <text x="281" y="10">7</text>
      </g>
    </svg>
  );
}

function VRuler() {
  const ticks: React.ReactNode[] = [];
  for (let i = -8; i < 65; i++) {
    const y = 44.300 + i * 5.330;
    if (y < 2 || y > 385) continue;
    const m = ((i % 16) + 16) % 16;
    const x = m === 0 ? 0 : m === 8 ? 11 : m % 4 === 0 ? 12 : 14;
    ticks.push(<path key={i} d={`M${x} ${Math.floor(y) + 0.5}H19`} />);
  }
  return (
    <svg className="h-[386px] w-[20px] shrink-0 overflow-visible" viewBox="0 0 20 386">
      <path d="M.5.500h19v385H.5z" fill="#f7f9f9" stroke="#444" />
      <g stroke="#444">{ticks}</g>
      <path d="M1 218.500h18" stroke="#333" strokeDasharray="1 1" />
      <g fontSize="11" fill="#555">
        <text transform="translate(10 41) rotate(-90)">6</text>
        <text transform="translate(10 127) rotate(-90)">5</text>
        <text transform="translate(10 212) rotate(-90)">4</text>
        <text transform="translate(10 298) rotate(-90)">3</text>
        <text transform="translate(10 383) rotate(-90)">2</text>
      </g>
    </svg>
  );
}

function Arrow({ d }: { d: string }) {
  return (
    <svg className="h-[8px] w-[8px] shrink-0" viewBox="0 0 8 8">
      <path d={d} fill="none" stroke="#555" strokeWidth="1.500" />
    </svg>
  );
}

function DocPane() {
  return (
    <div className="flex h-[472px] w-[334px] shrink-0 flex-col text-[12px] tracking-[-0.3px] text-[#1e1e1e]">
      <div className="flex h-[21px] items-center pl-[6px]">
        <MapBox size="m" />
        <span className="ml-[5px] w-[50px] pt-[2px]">Map</span>
        <div className="flex h-[22px] w-[95px] items-center self-end rounded-t-[4px] bg-[#d2d4d9] pl-[6px] text-[#4a4a4a]">
          <LayoutPage />
          <span className="ml-[5px] w-[51px] pt-[2px]">Layout1</span>
          <Close s="#666" />
        </div>
        <span className="ml-[149px] flex"><ChevBig /></span>
      </div>
      <div className="flex h-[451px] flex-col border-x border-b border-t-[3px] border-[#d2d4d9] bg-[#f9fafa]">
        <div className="flex h-[20px] pl-[20px]"><HRuler /></div>
        <div className="flex h-[386px]">
          <VRuler />
          <TractMap />
          <div className="flex w-[16px] flex-col items-center bg-[#ebebeb] pt-[4px]">
            <Arrow d="M1 6l3-3.500L7 6" />
            <div className="mt-[122px] h-[118px] w-[9px] rounded-full bg-[#b4b4b4]" />
            <div className="mt-[121px] flex"><Arrow d="M1 2l3 3.500L7 2" /></div>
          </div>
        </div>
        <div className="ml-[20px] flex h-[17px] w-[296px] items-center bg-[#ebebeb] pl-[4px]">
          <Arrow d="M6 1L2.500 4 6 7" />
          <div className="ml-[105px] h-[9px] w-[62px] rounded-full bg-[#b4b4b4]" />
          <div className="ml-[104px] flex"><Arrow d="M2 1l3.500 3L2 7" /></div>
        </div>
        <div className="flex h-[24px] items-center pl-[25px] tracking-[-0.5px]">
          <div className="flex h-[22px] w-[46px] items-center bg-white pl-[6px] pt-px">
            <span className="w-[30px]">89%</span>
            <DropTri />
          </div>
          <div className="ml-[4px] h-[15px] w-px bg-[#999]" />
          <svg className="ml-[4px] h-[20px] w-[20px]" viewBox="0 0 20 20">
            <path d="M.5.500h19v19H.5z" fill="#9dcdee" stroke="#0067ab" />
            <path d="M2.500 2.500h10v10h-10zM7.500 2.500v10M2.500 7.500h10" fill="none" stroke="#8a7f8a" />
            <path d="M9 9h6v6H9z" fill="#9dcdee" />
            <path d="M13.500 10v7M10 13.500h7" stroke="#444" strokeWidth="1.200" />
          </svg>
          <span className="ml-[4px] flex"><ChevBig /></span>
          <div className="ml-[8px] h-[15px] w-px bg-[#999]" />
          <span className="ml-[18px] w-[120px] tracking-[-0.6px]">7.632 , 3.950</span>
          <div className="h-[15px] w-px bg-[#999]" />
          <div className="ml-[7px] flex gap-[3px]">
            <div className="h-[14px] w-[4px] bg-[#666]" />
            <div className="h-[14px] w-[4px] bg-[#666]" />
          </div>
          <div className="ml-[9px] h-[15px] w-px bg-[#999]" />
          <svg className="ml-[6px] h-[16px] w-[16px]" viewBox="0 0 16 16">
            <path d="M1.500 6.500a6.500 5.500 0 0 1 11.500-2M14.500 9.500a6.500 5.500 0 0 1-11.500 2" fill="none" stroke="#4a9fd8" strokeWidth="2.400" />
            <path d="M15.500 0v6.500H9zM.5 16V9.500H7z" fill="#4a9fd8" />
          </svg>
        </div>
      </div>
    </div>
  );
}

/* ---------- symbology pane ---------- */

function FieldRow({ label, h, children }: Kids & { label: string; h: string }) {
  return (
    <div className={`flex items-center ${h}`}>
      <span className="w-[90px] shrink-0 pt-px">{label}</span>
      {children}
    </div>
  );
}

function SymbologyPane() {
  return (
    <div className="flex h-[472px] w-[320px] shrink-0 flex-col text-[12px] tracking-[-0.3px] text-[#4a4a4a]">
      <div className="flex h-[452px] flex-col rounded-t-[3px] border border-[#cdcdd1] bg-[#f7f9f9] pl-[6px]">
        <div className="flex h-[29px] items-center text-[15px] text-[#1e1e1e]">
          <span className="w-[259px] whitespace-nowrap tracking-[0.05px]">Symbology - sf_tracts selection</span>
          <ChevBig />
          <span className="ml-[9px] flex"><Pin /></span>
          <span className="ml-[10px] flex"><Close /></span>
        </div>
        <div className="flex h-[38px]">
          <div className="ml-[4px] flex h-[37px] w-[128px] items-start border-b-[2px] border-[#e2e3e4]">
            <div className="-mb-[2px] flex h-[37px] w-[32px] justify-center border-b-[3px] border-[#0079c1] pt-[4px]">
              <svg className="h-[24px] w-[24px]" viewBox="0 0 24 24">
                <path d="M4 1q8 3 16 0l3 18q-8 3-12 1-5-1-9 2Z" fill="#e6d34f" />
                <path d="M20 9L9 18" stroke="#666" strokeWidth="3" />
                <path d="M18.500 9.800L10 17" stroke="#ddd" />
                <path d="M7.500 16.500l2 2c-1 2.500-3 4-6 4 1.500-2 1.500-4.500 4-6z" fill="#a9683a" />
              </svg>
            </div>
            <div className="flex w-[32px] justify-center pt-[3px]">
              <svg className="h-[24px] w-[24px]" viewBox="0 0 24 24">
                <path d="M.7 1.700h15.500v15H.7z" fill="#f7f9f9" stroke="#4e9a4e" strokeWidth="1.200" />
                <path d="M2.500 3.500h12v11.500h-12z" fill="#80c080" />
                <path d="M11.500 7.500l11.500 4.500-5.500 11L6.500 18z" fill="#cfe8cf" fillOpacity=".85" stroke="#6aaa6a" strokeWidth="1.100" />
                <path d="M13 9.500l-3 6" stroke="#a5d3a5" />
              </svg>
            </div>
            <div className="flex w-[32px] justify-center pt-[3px]">
              <svg className="h-[25px] w-[22px]" viewBox="0 0 22 25">
                <path d="M.8 1h20.400v2.500L13.500 12v11.500h-5V12L.8 3.500z" fill="#a9a9a9" stroke="#7a7a7a" strokeWidth="1.100" />
                <path d="M10 13h1.500v9.500H10z" fill="#e8e8e8" />
                <path d="M1.500 1.500h19v1.300h-19z" fill="#d9d9d9" />
              </svg>
            </div>
            <div className="flex w-[32px] justify-center pt-[3px]">
              <svg className="h-[24px] w-[24px]" viewBox="0 0 24 24">
                <path d="M16 2L7 10.500" stroke="#666" strokeWidth="2.400" />
                <path d="M6 9l2 2c-1 2.500-4 4-7 4 2-1.500 2.500-4.500 5-6z" fill="#a9683a" />
                <path d="M9.500 12.500h14v10h-14zM9.500 10v3" fill="#fff" stroke="#777" strokeWidth="1.200" />
                <path d="M12 15.500h2M12 19h2" stroke="#5e4aa8" strokeWidth="1.600" />
                <path d="M15.500 15.500h6M15.500 19h6" stroke="#777" strokeWidth="1.200" />
              </svg>
            </div>
          </div>
          <div className="ml-[157px] mt-[13px] flex h-[13px] w-[14px] flex-col justify-between">
            <div className="h-[3px] rounded-full bg-[#5a5a5a]" />
            <div className="h-[3px] rounded-full bg-[#5a5a5a]" />
            <div className="h-[3px] rounded-full bg-[#5a5a5a]" />
          </div>
        </div>
        <div className="mt-[7px] h-[22px] text-[13px] font-semibold leading-[22px] tracking-[0px]">Primary symbology</div>
        <div className="mt-[3px] flex h-[22px] w-[306px] items-center border border-[#8a8a8a] bg-white pl-[3px] pt-px">
          <span className="w-[292px]">Unclassed Colors</span>
          <DropTri />
        </div>
        <FieldRow label="Field" h="mt-[6px] h-[22px]">
          <div className="flex h-[22px] w-[185px] items-center border border-[#8a8a8a] bg-white pl-[3px] text-[#1e1e1e]">
            <span className="w-[171px]">density</span>
            <DropTri />
          </div>
          <svg className="ml-[7px] h-[16px] w-[16px]" viewBox="0 0 16 16">
            <path d="M.7.7h14.600v14.600H.7z" fill="#f7f9f9" stroke="#777" strokeWidth="1.200" />
            <path d="M3.500 4q3-2 4.500 4t4.500 4M12.500 3.500Q10 4 8 8t-4.500 4.500" fill="none" stroke="#4e9a4e" strokeWidth="1.200" />
          </svg>
        </FieldRow>
        <FieldRow label="Normalization" h="mt-[7px] h-[22px]">
          <div className="flex h-[22px] w-[185px] items-center border border-[#8a8a8a] bg-white pl-[3px] pt-px text-[#1e1e1e]">
            <span className="w-[171px]">&lt;None&gt;</span>
            <DropTri />
          </div>
        </FieldRow>
        <FieldRow label="Color scheme" h="mt-[6px] h-[24px]">
          <div className="flex h-[24px] w-[185px] items-center border border-[#8a8a8a] bg-[#f7f9f9] pl-[3px]">
            <div className="h-[16px] w-[163px] bg-[linear-gradient(90deg,#08306b_0%,#0b539f_16%,#3585bf_34%,#62a8d2_48%,#a3cbe2_60%,#cddcf0_75%,#f7faff_100%)]" />
            <span className="ml-[8px] flex"><DropTri /></span>
          </div>
          <svg className="ml-[7px] h-[16px] w-[16px]" viewBox="-8 -8 16 16">
            {[0, 45, 90, 135, 180, 225, 270, 315].map((a) => (
              <path key={a} d="M-1-4.500V-7.800H1V-4.500z" fill="#777" transform={`rotate(${a})`} />
            ))}
            <circle r="4.700" fill="#ccc" stroke="#777" strokeWidth="1.200" />
            <circle r="2.200" fill="#f7f9f9" stroke="#777" />
          </svg>
        </FieldRow>
        <FieldRow label="Upper label" h="mt-[5px] h-[21px]">
          <div className="flex h-[21px] w-[185px] items-center border border-[#8a8a8a] bg-white pl-[4px] tracking-[-0.65px]">87,000</div>
        </FieldRow>
        <FieldRow label="Lower label" h="mt-[5px] h-[21px]">
          <div className="flex h-[21px] w-[185px] items-center border border-[#8a8a8a] bg-white pl-[4px] tracking-[-0.65px]">65</div>
        </FieldRow>
        <FieldRow label="Template" h="mt-[12px] h-[16px]">
          <div className="ml-[10px] h-[16px] w-[20px] border border-[#777]" />
        </FieldRow>
        <div className="mt-[13px] flex h-[20px] items-center text-[13px] text-[#9b9b9b]">
          <Arrow d="M2 .8L5.200 4 2 7.200" />
          <span className="ml-[5px] pt-px tracking-[-0.03px]">Null values</span>
        </div>
        <div className="mt-[9px] flex h-[9px] w-[306px] items-center justify-center gap-px border-y-2 border-[#c9c9c9] pl-[4px]">
          <span className="h-[5px] w-[5px] rounded-full bg-[#c9c9c9]" />
          <span className="h-[5px] w-[5px] rounded-full bg-[#c9c9c9]" />
          <span className="h-[5px] w-[5px] rounded-full bg-[#c9c9c9]" />
        </div>
        <div className="mt-[13px] flex h-[18px] items-center pl-[256px] text-[#1e1e1e]">
          <span className="w-[35px] tracking-[-0.2px]">More</span>
          <ChevBig />
        </div>
        <div className="mt-[8px] flex h-[15px] items-center pl-[93px] text-[11px]">87,000</div>
        <div className="-mt-px flex h-[36px]">
          <div className="flex h-[39px] w-[79px] flex-col justify-between text-right text-[11px] leading-[13px]">
            <span>87,000</span>
            <span>65</span>
          </div>
          <svg className="h-[34px] w-[227px] overflow-visible" viewBox="0 0 227 34">
            <defs>
              <linearGradient id="ramp" x1="0" y1="0" x2="0" y2="1">
                <stop offset="0" stopColor="#083c7d" />
                <stop offset=".25" stopColor="#1763ab" />
                <stop offset=".5" stopColor="#6aabd4" />
                <stop offset=".75" stopColor="#cddcf0" />
                <stop offset="1" stopColor="#f5f9ff" />
              </linearGradient>
            </defs>
            <path d="M2 2.500l8 4-8 4zM2 28.500l8 4-8 4z" fill="#000" />
            <path d="M14 7h25v25H14z" fill="url(#ramp)" />
            <path d="M14 6.500h25M14 32.500h25" stroke="#000" />
            <path d="M40 7.500h1M40 15.500h1M40 17.500h1M40 20.500h9M40 23.500h14M40 25.500h41M40 28.500h171M40 30.500h129" stroke="#c4c4c4" />
            <path d="M212 28.500h6" stroke="#222" />
            <path d="M222 22.500h4" stroke="#333" />
            <text x="220" y="33.500" fontSize="12" fill="#333">x</text>
          </svg>
        </div>
        <div className="flex h-[15px] items-center pl-[93px] text-[11px]">65</div>
      </div>
      <div className="-mt-px flex h-[21px]">
        <div className="flex w-[72px] items-center justify-center rounded-b-[3px] border-x border-b border-[#cdcdd1] bg-[#f7f9f9] pt-px tracking-[-0.2px] text-[#0079c1]">Symbology</div>
        <div className="flex items-center pl-[6px] pt-px tracking-[-0.1px]">Element</div>
      </div>
    </div>
  );
}

export default function App() {
  return (
    <div className="h-[640px] w-[1001px] overflow-hidden bg-[#51423f] pl-px font-['Open_Sans','Noto_Sans',sans-serif]">
      <div className="flex h-[640px] w-[1000px] flex-col overflow-hidden rounded-[8px] border-b border-r border-t border-b-[#999] border-r-[#a5a5a5] border-t-[#b3a5aa] bg-[#ebebeb]">
        <div className="flex h-[153px] shrink-0 flex-col bg-[#f7f9f9]">
          <TitleBar />
          <TabBar />
          <Ribbon />
        </div>
        <div className="flex items-start pl-[6px] pt-[7px]">
          <ContentsPane />
          <div className="ml-[6px] flex"><DocPane /></div>
          <div className="ml-[7px] flex"><SymbologyPane /></div>
        </div>
      </div>
    </div>
  );
}
